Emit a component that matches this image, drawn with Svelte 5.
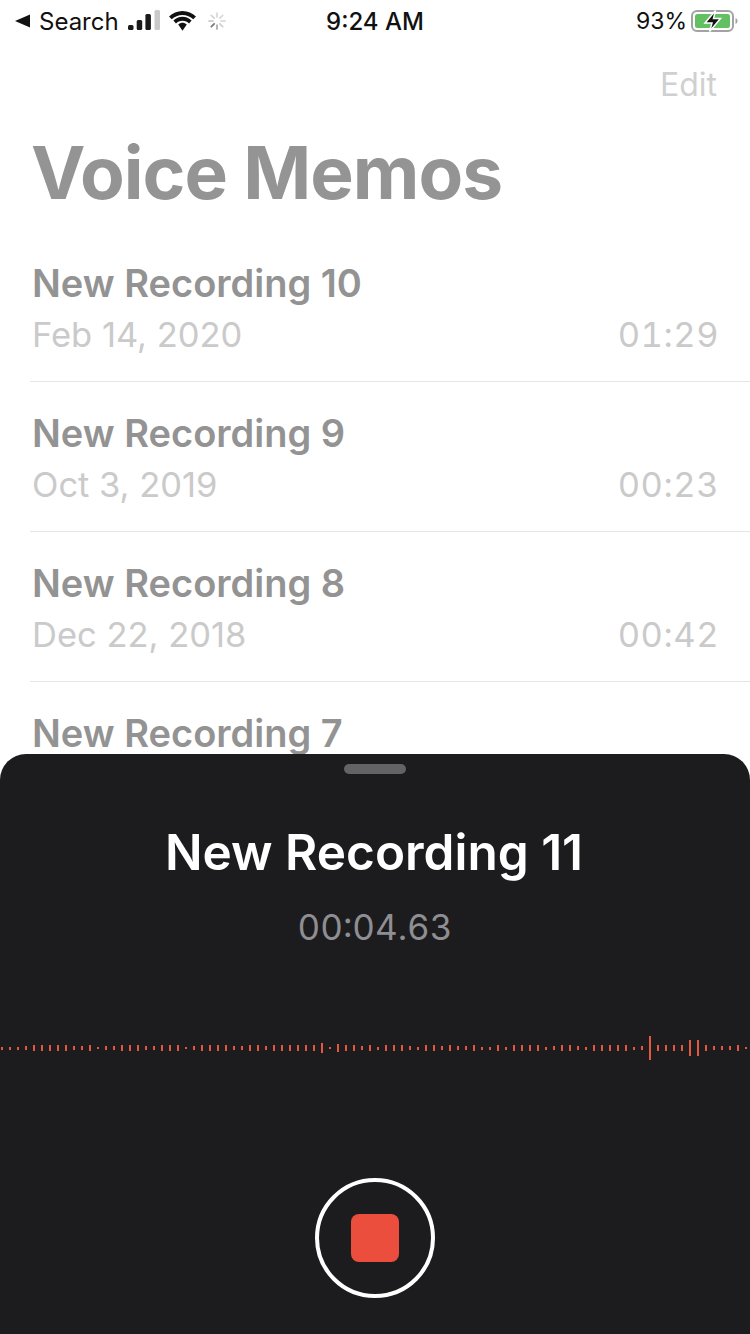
<script>
  const recordings = [
    { name: 'New Recording 10', date: 'Feb 14, 2020', time: '01:29' },
    { name: 'New Recording 9', date: 'Oct 3, 2019', time: '00:23' },
    { name: 'New Recording 8', date: 'Dec 22, 2018', time: '00:42' },
    { name: 'New Recording 7', date: 'Nov 2, 2018', time: '00:18' }
  ];

  // tick heights in px, one tick every 8px
  const ticks = [
    3, 3, 3, 4, 6, 6, 6, 6, 6, 4, 4, 6,
    2, 4, 4, 6, 6, 6, 4, 4, 6, 6, 6, 2,
    4, 6, 6, 6, 6, 4, 4, 6, 6, 4, 6, 6,
    6, 6, 6, 6, 10, 2, 8, 6, 6, 4, 6,
    3, 6, 6, 6, 4, 3, 6, 6, 4, 6, 4, 4,
    6, 3, 3, 6, 3, 6, 6, 6, 6, 3, 4, 6,
    6, 4, 3, 6, 6, 6, 6, 6, 3, 4, 24,
    6, 6, 6, 6, 16, 16, 6, 4, 4, 4, 6, 2
  ];
</script>

<div class="page">
  <header class="status">
    <div class="status-left">
      <svg class="back" width="15" height="14" viewBox="0 0 15 14"><path d="M15 0.5V13.500L0 7Z" /></svg>
      <span class="search">Search</span>
      <svg class="signal" width="32" height="22" viewBox="0 0 32 22">
        <rect x="0" y="15" width="5.500" height="5" rx="1.500" fill="#1a1a1a" />
        <rect x="8.700" y="10" width="5.500" height="10" rx="1.500" fill="#1a1a1a" />
        <rect x="17.400" y="4" width="5.500" height="16" rx="1.500" fill="#1a1a1a" />
        <rect x="26.500" y="0" width="5.500" height="20" rx="1.500" fill="#c9c9c9" />
      </svg>
      <svg class="wifi" width="29" height="22" viewBox="0 0 28 20" fill="#111">
        <path d="M14 4.200C18 4.200 21.700 5.800 24.400 8.400L27 5.600C23.600 2.300 19 0.300 14 0.300C9 0.300 4.400 2.300 1 5.600L3.600 8.400C6.300 5.800 10 4.200 14 4.200Z" />
        <path d="M14 9.800C16.500 9.800 18.600 10.700 20.300 12.300L22.800 9.600C20.500 7.400 17.400 6 14 6C10.600 6 7.500 7.400 5.200 9.600L7.700 12.300C9.400 10.700 11.500 9.800 14 9.800Z" />
        <path d="M14 11.800C12.500 11.800 11.100 12.400 9.900 13.400L14 19.500L18.100 13.400C16.900 12.400 15.500 11.800 14 11.800Z" />
      </svg>
      <svg class="spinner" width="20" height="20" viewBox="0 0 20 20" stroke-width="1.700" stroke-linecap="round">
        <path d="M10 2V6" stroke="#d8d8d8" />
        <path d="M15.700 4.300L12.800 7.200" stroke="#d8d8d8" />
        <path d="M18 10H14" stroke="#d4d4d4" />
        <path d="M15.700 15.700L12.800 12.800" stroke="#cfcfcf" />
        <path d="M10 18V14" stroke="#a8a8a8" />
        <path d="M4.300 15.700L7.200 12.800" stroke="#777" />
        <path d="M2 10H6" stroke="#c4c4c4" />
        <path d="M4.300 4.300L7.200 7.200" stroke="#d4d4d4" />
      </svg>
    </div>
    <span class="clock">9:24 AM</span>
    <div class="status-right">
      <span class="percent">93%</span>
      <svg width="47" height="24" viewBox="0 0 47 24">
        <rect x="1" y="2" width="41" height="20" rx="5" fill="none" stroke="#a3a3a3" stroke-width="2" />
        <rect x="4" y="5" width="35" height="14" rx="2.500" fill="#62bf62" />
        <path d="M44.500 9V15C45.700 14.700 46.500 13.500 46.500 12C46.500 10.500 45.700 9.300 44.500 9Z" fill="#a3a3a3" />
        <path d="M24.500 1.500L14 14H21L18.500 22.500L29.500 9.500H22.500Z" fill="#111" stroke="#fff" stroke-width="1.500" />
      </svg>
    </div>
  </header>

  <main class="library">
    <div class="edit-row"><span class="edit">Edit</span></div>
    <h1>Voice Memos</h1>
    <ul>
      {#each recordings as rec}
        <li>
          <div class="rec-name">{rec.name}</div>
          <div class="rec-meta"><span>{rec.date}</span><span class="dur">{rec.time}</span></div>
        </li>
      {/each}
    </ul>
  </main>

  <section class="sheet">
    <div class="grabber"></div>
    <h2>New Recording 11</h2>
    <div class="elapsed">00:04.63</div>
    <div class="wave">
      {#each ticks as h}
        <i style="height: {h}px"></i>
      {/each}
    </div>
    <button class="stop" aria-label="Stop recording"><span></span></button>
  </section>
</div>

<style>
  :global(body) {
    margin: 0;
    background: #fff;
  }

  .page {
    position: relative;
    width: 750px;
    height: 1334px;
    overflow: hidden;
    font-family: Inter, "Liberation Sans", sans-serif;
    background: #fff;
  }

  .status {
    height: 42px;
    display: grid;
    grid-template-columns: 1fr auto 1fr;
    align-items: center;
    color: #111;
    font-size: 24px;
  }

  .status-left {
    display: flex;
    align-items: center;
    padding-left: 15px;
  }

  .back {
    fill: #111;
    margin-right: 9px;
  }

  .search {
    margin-right: 9px;
  }

  .signal {
    margin-right: 8px;
  }

  .wifi {
    margin-right: 10px;
  }

  .clock {
    font-weight: 500;
  }

  .status-right {
    display: flex;
    align-items: center;
    justify-content: flex-end;
    gap: 4px;
    padding-right: 12px;
  }

  .percent {
    font-size: 23px;
  }

  .library {
    color: #9a9a9a;
  }

  .edit-row {
    display: flex;
    justify-content: flex-end;
    padding: 24px 33px 0 0;
  }

  .edit {
    font-size: 32px;
    line-height: 38px;
    color: #d0d0d0;
  }

  h1 {
    margin: 25px 0 0 31px;
    font-size: 73px;
    line-height: 88px;
    font-weight: 700;
    letter-spacing: -1px;
    color: #949494;
  }

  ul {
    list-style: none;
    margin: 15px 0 0 30px;
    padding: 0;
  }

  li {
    height: 149px;
    border-bottom: 1px solid #e6e6e6;
    padding-left: 2px;
    padding-right: 31px;
  }

  .rec-name {
    font-size: 38px;
    line-height: 46px;
    font-weight: 600;
    color: #939393;
    padding-top: 28px;
  }

  .rec-meta {
    display: flex;
    justify-content: space-between;
    font-size: 34.500px;
    line-height: 42px;
    margin-top: 8px;
    color: #cacaca;
  }

  .dur {
    font-variant-numeric: tabular-nums;
    letter-spacing: 0.500px;
  }

  .sheet {
    position: absolute;
    left: 0;
    right: 0;
    bottom: 0;
    height: 580px;
    box-sizing: border-box;
    background: #1c1c1e;
    border-radius: 26px 26px 0 0;
    display: flex;
    flex-direction: column;
    align-items: center;
    padding-top: 10px;
  }

  .grabber {
    width: 62px;
    height: 10px;
    border-radius: 5px;
    background: #636366;
  }

  h2 {
    margin: 48px 0 0 -2px;
    font-size: 49.500px;
    line-height: 60px;
    font-weight: 600;
    color: #fff;
  }

  .elapsed {
    margin-top: 24px;
    font-size: 35px;
    line-height: 43px;
    color: #8e8e93;
    font-variant-numeric: tabular-nums;
  }

  .wave {
    align-self: stretch;
    height: 24px;
    margin-top: 87px;
    padding-left: 1px;
    display: flex;
    align-items: center;
    gap: 6px;
  }

  .wave i {
    flex: none;
    width: 2px;
    background: #e5573f;
  }

  .stop {
    width: 120px;
    height: 120px;
    margin-top: 118px;
    padding: 0;
    box-sizing: border-box;
    border: 4px solid #fff;
    border-radius: 50%;
    background: none;
    display: flex;
    align-items: center;
    justify-content: center;
  }

  .stop span {
    width: 48px;
    height: 48px;
    border-radius: 8px;
    background: #ec4e3d;
  }
</style>
